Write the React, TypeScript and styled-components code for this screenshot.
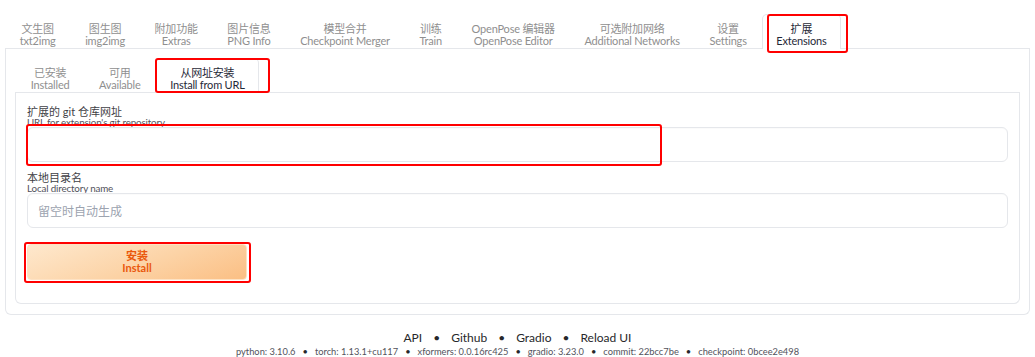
import React from "react";
import styled, { createGlobalStyle } from "styled-components";

const GlobalStyle = createGlobalStyle`
  html, body { margin: 0; padding: 0; background: #ffffff; }
  body {
    font-family: Lato, "Noto Sans CJK SC", sans-serif;
    color: #374151;
    -webkit-font-smoothing: antialiased;
  }
  * { box-sizing: border-box; }
`;

const Page = styled.div`
  padding: 0 5px;
  width: 1035px;
`;

const TabBar = styled.div`
  display: flex;
  margin-top: 14px;
  border-bottom: 1px solid #e5e7eb;
`;

const Tab = styled.div<{ $active?: boolean }>`
  position: relative;
  display: flex;
  flex-direction: column;
  align-items: center;
  justify-content: flex-start;
  height: 35px;
  padding: 7px 13.8px 0;
  margin-bottom: -1px;
  border: 1px solid ${(p) => (p.$active ? "#e5e7eb" : "transparent")};
  border-bottom: none;
  border-radius: 5px 5px 0 0;
  background: ${(p) => (p.$active ? "#ffffff" : "transparent")};
  color: ${(p) => (p.$active ? "#1f2937" : "#8f8f8f")};
  font-size: 11px;
  letter-spacing: -0.2px;
  white-space: nowrap;
`;

const TabZh = styled.span`
  line-height: 13px;
`;

const TabEn = styled.span`
  line-height: 13px;
  margin-top: -1px;
`;

const Highlight = styled.div<{ $inset: string }>`
  position: absolute;
  inset: ${(p) => p.$inset};
  border: 2px solid #ff0000;
  border-radius: 3px;
  pointer-events: none;
`;

const OuterPanel = styled.div`
  border: 1px solid #e5e7eb;
  border-top: none;
  border-radius: 0 0 6px 6px;
  padding: 9px 9px 10px;
`;

const SubTabBar = styled.div`
  display: flex;
  padding-left: 1px;
  border-bottom: 1px solid #e5e7eb;
`;

const InnerPanel = styled.div`
  border: 1px solid #e5e7eb;
  border-top: none;
  border-radius: 0 0 6px 6px;
  padding: 13px 11px 23px;
  display: flex;
  flex-direction: column;
`;

const Field = styled.div<{ $gap?: number }>`
  position: relative;
  display: flex;
  flex-direction: column;
  margin-bottom: ${(p) => p.$gap ?? 0}px;
`;

const LabelMain = styled.div`
  font-size: 11px;
  line-height: 11px;
  color: #3f3f46;
`;

const LabelSub = styled.div`
  font-size: 9.8px;
  letter-spacing: -0.15px;
  line-height: 10px;
  color: #52525b;
`;

const Input = styled.div`
  height: 35px;
  border: 1px solid #e5e7eb;
  border-radius: 6px;
  background: #ffffff;
  box-shadow: inset 0 1px 1px rgba(0, 0, 0, 0.02);
  display: flex;
  align-items: center;
  padding: 0 10px;
  font-size: 12px;
  color: #9ca3af;
`;

const ButtonWrap = styled.div`
  position: relative;
  width: 220px;
`;

const InstallButton = styled.div`
  height: 36px;
  border-radius: 4px;
  border: 1px solid #fde2c4;
  background: linear-gradient(160deg, #fee8cd 0%, #fcd3a6 55%, #fbbf84 100%);
  display: flex;
  flex-direction: column;
  align-items: center;
  justify-content: center;
  color: #ea580c;
  font-size: 11px;
  line-height: 12px;
  font-weight: 700;
`;

const Footer = styled.div`
  margin-top: 15px;
  display: flex;
  flex-direction: column;
  align-items: center;
`;

const FooterLinks = styled.div`
  font-size: 12px;
  line-height: 15px;
  color: #27272a;
  display: flex;
  gap: 11px;
`;

const FooterInfo = styled.div`
  font-size: 9.3px;
  line-height: 13px;
  color: #52525b;
  display: flex;
  gap: 7px;
`;

const Dot = styled.span`
  color: #27272a;
`;

const tabs: [string, string][] = [
  ["文生图", "txt2img"],
  ["图生图", "img2img"],
  ["附加功能", "Extras"],
  ["图片信息", "PNG Info"],
  ["模型合并", "Checkpoint Merger"],
  ["训练", "Train"],
  ["OpenPose 编辑器", "OpenPose Editor"],
  ["可选附加网络", "Additional Networks"],
  ["设置", "Settings"],
  ["扩展", "Extensions"],
];

const subTabs: [string, string][] = [
  ["已安装", "Installed"],
  ["可用", "Available"],
  ["从网址安装", "Install from URL"],
];

const links = ["API", "Github", "Gradio", "Reload UI"];
const infos = [
  "python: 3.10.6",
  "torch: 1.13.1+cu117",
  "xformers: 0.0.16rc425",
  "gradio: 3.23.0",
  "commit: 22bcc7be",
  "checkpoint: 0bcee2e498",
];

export default function App() {
  return (
    <Page>
      <GlobalStyle />
      <TabBar>
        {tabs.map(([zh, en], i) => {
          const active = i === tabs.length - 1;
          return (
            <Tab key={en} $active={active}>
              <TabZh>{zh}</TabZh>
              <TabEn>{en}</TabEn>
              {active && <Highlight $inset="-1px -8px -4px 4px" />}
            </Tab>
          );
        })}
      </TabBar>
      <OuterPanel>
        <SubTabBar>
          {subTabs.map(([zh, en], i) => {
            const active = i === subTabs.length - 1;
            return (
              <Tab key={en} $active={active}>
                <TabZh>{zh}</TabZh>
                <TabEn>{en}</TabEn>
                {active && <Highlight $inset="-1px -12px 0 -1px" />}
              </Tab>
            );
          })}
        </SubTabBar>
        <InnerPanel>
          <Field $gap={10}>
            <LabelMain>扩展的 git 仓库网址</LabelMain>
            <LabelSub>URL for extension's git repository</LabelSub>
            <Input />
            <Highlight $inset="18px auto -4px -1px" style={{ width: 636 }} />
          </Field>
          <Field $gap={16}>
            <LabelMain>本地目录名</LabelMain>
            <LabelSub>Local directory name</LabelSub>
            <Input>留空时自动生成</Input>
          </Field>
          <ButtonWrap>
            <InstallButton>
              <span>安装</span>
              <span>Install</span>
            </InstallButton>
            <Highlight $inset="-2px -4px -3px -3px" />
          </ButtonWrap>
        </InnerPanel>
      </OuterPanel>
      <Footer>
        <FooterLinks>
          {links.map((l, i) => (
            <React.Fragment key={l}>
              {i > 0 && <Dot>•</Dot>}
              <span>{l}</span>
            </React.Fragment>
          ))}
        </FooterLinks>
        <FooterInfo>
          {infos.map((l, i) => (
            <React.Fragment key={l}>
              {i > 0 && <Dot>•</Dot>}
              <span>{l}</span>
            </React.Fragment>
          ))}
        </FooterInfo>
      </Footer>
    </Page>
  );
}
